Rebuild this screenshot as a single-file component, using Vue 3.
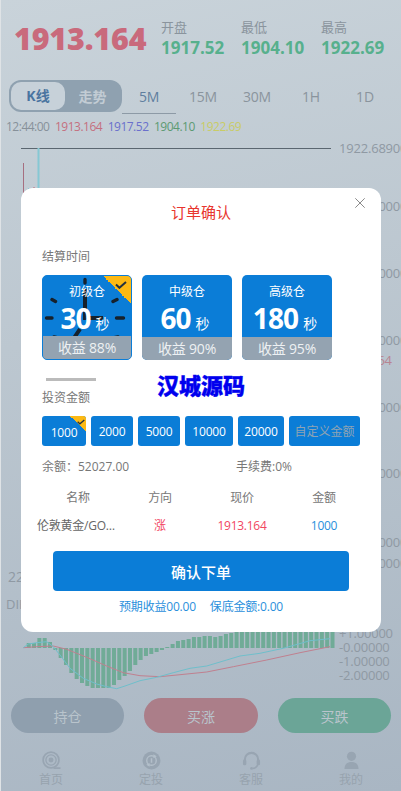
<script setup>
const stats = [
  { label: '开盘', value: '1917.52' },
  { label: '最低', value: '1904.10' },
  { label: '最高', value: '1922.69' }
]
const periods = ['5M', '15M', '30M', '1H', '1D']
const quote = [
  { text: '12:44:00', cls: 'q-time' },
  { text: '1913.164', cls: 'q-red' },
  { text: '1917.52', cls: 'q-blue' },
  { text: '1904.10', cls: 'q-green' },
  { text: '1922.69', cls: 'q-yellow' }
]
const axis = [
  { y: 15, t: '1922.68900' }, { y: 73, t: '1920.00000' }, { y: 140, t: '1915.00000' },
  { y: 207, t: '1910.00000' }, { y: 274, t: '1905.00000' }, { y: 340, t: '1900.00000' },
  { y: 409, t: '1895.00000' }, { y: 430, t: '1890.00000' },
  { y: 500, t: '+1.00000' }, { y: 514, t: '-0.00000' }, { y: 528, t: '-1.00000' }, { y: 542, t: '-2.00000' }
]
const heights = [5, 5, 10, 10, 6, -2, -10, -17, -25, -31, -35, -38, -40, -40, -40, -40, -37, -32, -28, -23, -17, -12, -8, -6, -4, -2, 1, 4, 7, 8, 9, 11, 11, 12, 12, 11, 12, 14, 15, 16, 16, 16, 16, 16, 16, 16, 16, 16, 16, 16, 16, 16, 16, 16, 16, 16, 16, 16]
const baseY = 515
const bars = heights.map((h, i) => ({
  x: 26.7 + i * 5.33,
  y: h > 0 ? baseY - h : baseY,
  h: Math.abs(h)
}))
const toPts = list => list.map(([x, y]) => `${(x / 3).toFixed(1)},${(y / 3 + 407).toFixed(1)}`).join(' ')
const cyan = toPts([[70, 323], [85, 312], [110, 308], [140, 305], [160, 320], [180, 345], [210, 385], [250, 415], [290, 432], [320, 440], [350, 446], [375, 438], [420, 422], [470, 412], [520, 398], [570, 385], [620, 378], [680, 360], [720, 348], [780, 340], [850, 325], [930, 302], [990, 296]])
const pink = toPts([[70, 323], [110, 320], [160, 318], [200, 328], [260, 352], [320, 378], [370, 398], [420, 407], [480, 410], [540, 404], [620, 396], [700, 380], [800, 360], [900, 338], [990, 320]])
const cards = [
  { name: '初级仓', sec: '30', gain: '收益 88%', on: true },
  { name: '中级仓', sec: '60', gain: '收益 90%', on: false },
  { name: '高级仓', sec: '180', gain: '收益 95%', on: false }
]
const amounts = [
  { t: '1000', w: 44, on: true }, { t: '2000', w: 42 }, { t: '5000', w: 42 },
  { t: '10000', w: 48 }, { t: '20000', w: 46 }
]
const heads = ['名称', '方向', '现价', '金额']
const tabs = ['首页', '定投', '客服', '我的']
</script>

<template>
  <div class="page">
    <header class="head">
      <div class="price">1913.164</div>
      <div v-for="s in stats" :key="s.label" class="stat">
        <span class="stat-l">{{ s.label }}</span>
        <span class="stat-v">{{ s.value }}</span>
      </div>
    </header>

    <nav class="periods">
      <div class="switch">
        <span class="sw-on">K线</span>
        <span class="sw-off">走势</span>
      </div>
      <span v-for="(p, i) in periods" :key="p" class="period" :class="{ active: i === 0 }">{{ p }}</span>
    </nav>

    <div class="quote">
      <span v-for="q in quote" :key="q.text" :class="q.cls">{{ q.text }}</span>
    </div>

    <section class="chart">
      <svg class="chart-svg" viewBox="0 0 400 565" width="400" height="565">
        <line x1="21" y1="15.5" x2="331" y2="15.5" stroke="#5a6670" stroke-width="1" />
        <line x1="23.5" y1="30" x2="23.5" y2="60" stroke="#a66f80" stroke-width="1" />
        <rect x="37.5" y="15" width="2" height="45" fill="#86c8d4" />
        <rect x="28" y="55" width="1" height="8" fill="#86c8d4" />
        <rect x="33" y="54" width="2" height="8" fill="#c09aa5" />
        <rect v-for="(b, i) in bars" :key="i" :x="b.x" :y="b.y" width="4" :height="b.h" fill="#70ab97" />
        <polyline :points="pink" fill="none" stroke="#c0808f" stroke-width="1" />
        <polyline :points="cyan" fill="none" stroke="#6fbfcb" stroke-width="1" />
      </svg>
      <span v-for="a in axis" :key="a.y" class="axis" :style="{ top: a.y + 'px' }">{{ a.t }}</span>
      <span class="axis axis-red">1913.164</span>
      <span class="stray stray-a">22</span>
      <span class="stray stray-b">DIF</span>
    </section>

    <div class="actions">
      <button class="act act-hold">持仓</button>
      <button class="act act-up">买涨</button>
      <button class="act act-down">买跌</button>
    </div>

    <footer class="tabbar">
      <div v-for="(t, i) in tabs" :key="t" class="tab">
        <svg v-if="i === 0" class="tab-i" viewBox="0 0 20 20">
          <circle cx="9.5" cy="9.5" r="8.3" fill="none" stroke="#98a5b2" stroke-width="1.8" />
          <circle cx="9.5" cy="9.5" r="5.4" fill="none" stroke="#98a5b2" stroke-width="1.4" />
          <circle cx="9.5" cy="9.5" r="2.6" fill="#98a5b2" />
          <path d="M13 17.2 H19.5 V19 H12 Z" fill="#98a5b2" />
        </svg>
        <svg v-else-if="i === 1" class="tab-i" viewBox="0 0 20 20">
          <circle cx="10" cy="10" r="9.4" fill="#98a5b2" />
          <circle cx="10" cy="10" r="5" fill="none" stroke="#b3bfca" stroke-width="1.4" />
          <path d="M12 3.5 L15.5 5.5 L12 7.5 Z M8 12.5 L4.5 14.5 L8 16.5 Z" fill="#b3bfca" />
          <rect x="9.2" y="7.6" width="1.6" height="4.8" fill="#b3bfca" />
        </svg>
        <svg v-else-if="i === 2" class="tab-i" viewBox="0 0 20 20">
          <path d="M3 11 V9 A7 7 0 0 1 17 9 V11" fill="none" stroke="#98a5b2" stroke-width="2.2" />
          <rect x="1" y="9" width="3.6" height="6" rx="1.6" fill="#98a5b2" />
          <rect x="15.4" y="9" width="3.6" height="6" rx="1.6" fill="#98a5b2" />
          <path d="M16.5 14.5 Q15.5 18 11 18.3" fill="none" stroke="#98a5b2" stroke-width="1.6" />
          <circle cx="10" cy="18.3" r="1.4" fill="#98a5b2" />
        </svg>
        <svg v-else class="tab-i" viewBox="0 0 20 20">
          <circle cx="10" cy="5.6" r="4.8" fill="#98a5b2" />
          <path d="M2.6 19 C2.6 13.6 6 11.6 10 11.6 C14 11.6 17.4 13.6 17.4 19 Z" fill="#98a5b2" />
        </svg>
        <span class="tab-t">{{ t }}</span>
      </div>
    </footer>

    <div class="modal">
      <div class="m-title">订单确认</div>
      <svg class="m-close" viewBox="0 0 10 10" width="10" height="10">
        <path d="M0.3 0.3 L9.7 9.7 M9.7 0.3 L0.3 9.7" stroke="#8a8a8a" stroke-width="1" fill="none" />
      </svg>

      <div class="m-label first">结算时间</div>
      <div class="cards">
        <div v-for="c in cards" :key="c.name" class="card" :class="{ 'card-on': c.on }">
          <svg v-if="c.on" class="clock" viewBox="0 0 90 64" width="90" height="64">
            <g stroke="#16212c" stroke-width="3.4" stroke-linecap="round" fill="none">
              <path d="M4.5 43 H10 M74.5 43 H81.5 M10 24.5 L13.5 26.5 M71 26.5 L75 24.5 M43 4.5 V8 M12 62 L16 63 M71 63 L76 62" />
            </g>
            <g stroke="#16212c" stroke-width="4" fill="none">
              <path d="M43 14 V43 H61 M38 54 L30 66" />
            </g>
          </svg>
          <span v-if="c.on" class="corner">
            <svg viewBox="0 0 12 8" width="12" height="8"><path d="M1 3.5 L4.4 6.8 L11 1" stroke="#24323f" stroke-width="2" fill="none" /></svg>
          </span>
          <div class="card-name">{{ c.name }}</div>
          <div class="card-sec"><b>{{ c.sec }}</b><i>秒</i></div>
          <div class="card-gain">{{ c.gain }}</div>
        </div>
      </div>

      <div class="brand-row">
        <span class="rule"></span>
        <span class="brand">汉城源码</span>
      </div>

      <div class="m-label">投资金额</div>
      <div class="amounts">
        <button v-for="a in amounts" :key="a.t" class="amount" :class="{ 'amount-on': a.on }" :style="{ width: a.w + 'px' }">
          {{ a.t }}
          <span v-if="a.on" class="corner small">
            <svg viewBox="0 0 12 8" width="8" height="6"><path d="M1 3.5 L4.4 6.8 L11 1" stroke="#24323f" stroke-width="2" fill="none" /></svg>
          </span>
        </button>
        <button class="amount amount-custom">自定义金额</button>
      </div>

      <div class="balance">
        <span class="bal-a">余额：52027.00</span>
        <span>手续费:0%</span>
      </div>

      <div class="table">
        <span v-for="h in heads" :key="h" class="th">{{ h }}</span>
        <span class="td td-name">伦敦黄金/GOLD</span>
        <span class="td red">涨</span>
        <span class="td red">1913.164</span>
        <span class="td blue">1000</span>
      </div>

      <button class="confirm">确认下单</button>
      <div class="expect">
        <span>预期收益00.00</span>
        <span>保底金额:0.00</span>
      </div>
    </div>
  </div>
</template>

<style>
html, body { margin: 0; padding: 0; }
</style>

<style scoped>
* { box-sizing: border-box; }
.page {
  position: relative;
  width: 401px;
  height: 791px;
  overflow: hidden;
  display: flex;
  flex-direction: column;
  border-left: 1px solid #dfe3e6;
  background: linear-gradient(168deg, #c9d3da 0%, #bcc7d0 40%, #a9b6c3 100%);
  font-family: "Open Sans", "Noto Sans CJK SC", sans-serif;
  color: #8a949d;
}
.head {
  height: 80px;
  flex: none;
  display: flex;
  padding: 17px 0 0 13px;
}
.price {
  width: 147px;
  font-size: 30.5px;
  line-height: 42px;
  font-weight: 800;
  letter-spacing: -0.2px;
  color: #c96a7c;
  white-space: nowrap;
}
.stat {
  width: 80px;
  display: flex;
  flex-direction: column;
}
.stat-l { font-size: 13px; line-height: 20px; color: #8a949d; }
.stat-v { font-size: 17px; line-height: 22px; font-weight: 700; color: #57b08d; }
.periods {
  height: 34px;
  flex: none;
  display: flex;
  padding-left: 8px;
}
.switch {
  width: 113px;
  height: 32px;
  display: flex;
  align-items: center;
  padding: 2px;
  border-radius: 12px;
  background: #8fa1b0;
  font-size: 14px;
  font-weight: 700;
}
.sw-on {
  width: 54px;
  height: 28px;
  line-height: 28px;
  text-align: center;
  border-radius: 10px;
  background: #c7d1d9;
  color: #4a74a0;
}
.sw-off { flex: 1; text-align: center; color: #c2ccd4; }
.period {
  width: 54px;
  height: 34px;
  line-height: 34px;
  text-align: center;
  font-size: 14px;
  letter-spacing: -0.2px;
  color: #8a949d;
}
.period.active {
  color: #5f7e9e;
  border-bottom: 1px solid #8d9aa6;
}
.quote {
  height: 19px;
  flex: none;
  display: flex;
  gap: 5.5px;
  padding: 4px 0 0 5px;
  font-size: 12px;
  letter-spacing: -0.5px;
  line-height: 18px;
  white-space: nowrap;
}
.q-time { color: #87919a; }
.q-red { color: #c4707f; }
.q-blue { color: #6a70cc; }
.q-green { color: #5c9a72; }
.q-yellow { color: #c9cc66; }
.chart {
  position: relative;
  flex: none;
  height: 565px;
}
.chart-svg { position: absolute; left: -1px; top: 0; }
.axis {
  position: absolute;
  left: 338px;
  font-size: 13px;
  letter-spacing: -0.2px;
  line-height: 14px;
  margin-top: -7px;
  color: #8f99a3;
  white-space: nowrap;
}
.axis-red { top: 227px; letter-spacing: -0.35px; color: #b88592; }
.stray { position: absolute; font-size: 13px; line-height: 16px; color: #8f99a3; }
.stray-a { left: 7px; top: 436px; font-size: 14px; }
.stray-b { left: 5px; top: 463px; }
.actions {
  height: 35px;
  flex: none;
  display: flex;
  justify-content: space-between;
  padding: 0 10px;
}
.act {
  width: 113px;
  height: 35px;
  border: 0;
  padding: 0;
  border-radius: 18px;
  font: inherit;
  font-size: 14px;
  color: #b9c4cc;
}
.act-hold { background: #8f9fae; }
.act-up { background: #ab7e89; width: 114px; }
.act-down { background: #6ba597; }
.tabbar {
  height: 58px;
  flex: none;
  display: flex;
}
.tab {
  width: 100px;
  display: flex;
  flex-direction: column;
  align-items: center;
}
.tab-i { width: 19px; height: 19px; margin-top: 18px; }
.tab-t { font-size: 12px; line-height: 16px; margin-top: 2px; color: #97a3ae; }

.modal {
  position: absolute;
  left: 20px;
  top: 188px;
  width: 360px;
  height: 444px;
  padding: 0 21px;
  border-radius: 12px;
  background: #fff;
  color: #777;
}
.m-title {
  height: 48px;
  line-height: 48px;
  margin: 0 -21px;
  text-align: center;
  font-size: 15px;
  color: #e8352e;
}
.m-close { position: absolute; right: 16px; top: 10px; }
.m-label { font-size: 12px; line-height: 18px; color: #777; }
.m-label.first { margin-top: 12px; margin-bottom: 9px; }
.cards { display: flex; gap: 10px; }
.card {
  position: relative;
  width: 90px;
  height: 85px;
  display: flex;
  flex-direction: column;
  align-items: center;
  overflow: hidden;
  border-radius: 5px;
  background: #0b7dd7;
  color: #fff;
}
.card-on { border: 1px solid #0b7dd7; }
.clock { position: absolute; left: -1px; top: -1px; }
.corner {
  position: absolute;
  right: 0;
  top: 0;
  width: 28px;
  height: 28px;
  background: linear-gradient(to top right, transparent 50%, #fdb913 50%);
}
.corner svg { position: absolute; right: 4px; top: 5px; }
.corner.small { width: 16px; height: 16px; }
.corner.small svg { right: 1px; top: 3px; }
.card-name {
  position: relative;
  margin-top: 8px;
  font-size: 12px;
  line-height: 18px;
}
.card-on .card-name { margin-top: 7px; }
.card-sec {
  position: relative;
  height: 37px;
  line-height: 37px;
  margin-top: -1px;
  padding-right: 4px;
  white-space: nowrap;
}
.card-sec b { font-size: 28px; font-weight: 700; letter-spacing: -0.9px; }
.card-sec i { font-style: normal; font-size: 14px; margin-left: 5px; }
.card-gain {
  position: absolute;
  left: 0;
  right: 0;
  bottom: 0;
  height: 23px;
  line-height: 24px;
  text-align: center;
  font-size: 14px;
  letter-spacing: -0.2px;
  color: #eef1f3;
  background: #94a3b1;
}
.brand-row {
  position: relative;
  height: 29px;
}
.rule {
  position: absolute;
  left: 4px;
  top: 18px;
  width: 50px;
  height: 3px;
  background: #bbb;
}
.brand {
  position: absolute;
  left: 115px;
  top: 10px;
  font-size: 22px;
  line-height: 30px;
  font-weight: 900;
  -webkit-text-stroke: 0.4px #0000ee;
  color: #0000ee;
  white-space: nowrap;
}
.amounts {
  display: flex;
  gap: 5px;
  margin-top: 9px;
  width: 320px;
}
.amount {
  position: relative;
  flex: none;
  height: 30px;
  padding: 0;
  border: 0;
  overflow: hidden;
  border-radius: 3px;
  background: #0b7dd7;
  color: #fff;
  font: inherit;
  font-size: 12px;
  letter-spacing: -0.2px;
}
.amount-on { padding-top: 2px; }
.amount-custom { width: 71px; font-size: 12px; letter-spacing: 0; color: #8fa3b3; }
.balance {
  display: flex;
  margin-top: 12px;
  font-size: 12px;
  line-height: 18px;
  color: #777;
}
.bal-a { width: 194px; }
.table {
  display: grid;
  grid-template-columns: repeat(4, 82px);
  grid-auto-rows: 28px;
  margin: 7px 0 0 -5px;
  align-items: center;
  text-align: center;
  font-size: 12px;
  letter-spacing: -0.25px;
}
.th { color: #777; }
.td { color: #666; }
.td-name {
  overflow: hidden;
  white-space: nowrap;
  text-overflow: ellipsis;
  padding-right: 2px;
}
.red { color: #f2475f; }
.blue { color: #2a8fdc; }
.confirm {
  display: block;
  width: 296px;
  height: 40px;
  margin: 12px 0 0 11px;
  border: 0;
  border-radius: 4px;
  background: #0b7dd7;
  color: #fff;
  font: inherit;
  font-size: 15px;
  font-weight: 500;
}
.expect {
  display: flex;
  justify-content: center;
  gap: 14px;
  margin-top: 7px;
  font-size: 12px;
  letter-spacing: -0.2px;
  line-height: 18px;
  color: #2a8fdc;
}
</style>
